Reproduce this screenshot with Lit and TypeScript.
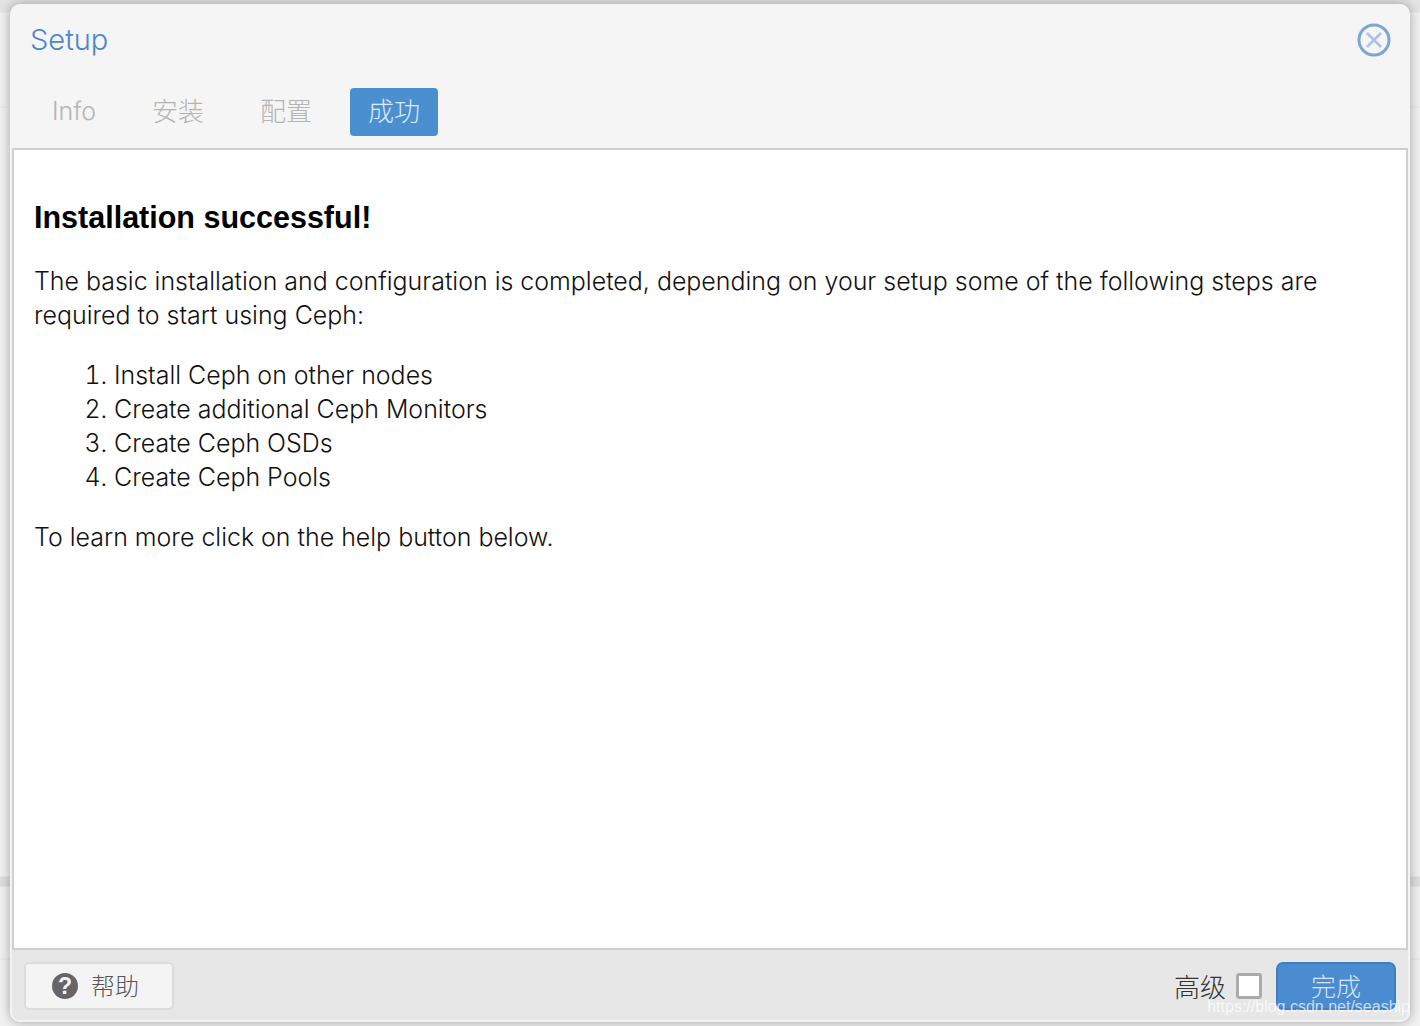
import { LitElement, html, css } from "lit";
import { customElement } from "lit/decorators.js";

const SANS = css`"Liberation Sans", "Noto Sans CJK SC", Arial, sans-serif`;
const LIGHT = css`Inter, "Noto Sans CJK SC", Arial, sans-serif`;

@customElement("app-root")
export class AppRoot extends LitElement {
  static styles = css`
    :host { display: block; width: 1420px; height: 1026px; background: #f1f1f1; font-family: ${SANS}; overflow: hidden; position: relative; }
    .page { height: 1026px; box-sizing: border-box; padding: 4px 10px 4px; background: linear-gradient(#e4e4e4 0, #e4e4e4 12px, #f1f1f1 13px, #f1f1f1 106px, #e6e6e6 107px, #f1f1f1 108px, #f1f1f1 876px, #dedede 877px, #dedede 886px, #f1f1f1 887px, #f1f1f1 958px, #e2e2e2 959px, #f1f1f1 960px); }
    .dialog { height: 1018px; box-sizing: border-box; background: #f5f5f5; border-radius: 10px; display: flex; flex-direction: column; padding: 0 2px 0; box-shadow: 0 0 12px rgba(0,0,0,.32); overflow: hidden; }
    .head { height: 84px; flex: none; display: flex; justify-content: space-between; align-items: flex-start; box-sizing: border-box; padding: 18px 18px 0 18px; }
    .title { font-family: ${LIGHT}; font-size: 29px; line-height: 36px; color: #4a88c7; font-weight: 300; }
    .close { margin: 1px -1px 0 0; width: 34px; height: 34px; display: block; }
    .tabs { height: 60px; flex: none; display: flex; gap: 20px; align-items: flex-start; padding-left: 14px; }
    .tab { width: 88px; height: 48px; padding-bottom: 5px; box-sizing: border-box; border-radius: 4px; display: flex; align-items: center; justify-content: center; font-family: ${LIGHT}; font-weight: 300; font-size: 26px; color: #b4b4b4; }
    .tab.first { padding: 0 0 3px 8px; font-size: 25px; }
    .tab.on { background: #4a8fd0; color: #dfeaf6; }
    .content { flex: 1; background: #fff; border: 2px solid #cfcfcf; box-sizing: border-box; padding: 49px 20px 0 20px; color: #111; font-family: ${LIGHT}; font-weight: 300; font-size: 24.95px; line-height: 34px; }
    h1 { margin: 0 0 29px; font-family: ${SANS}; font-size: 30.5px; line-height: 36px; font-weight: 700; color: #000; }
    p { margin: 0; }
    ol { margin: 26px 0 26px; padding: 0 0 0 80px; }
    .foot { height: 72px; flex: none; background: #e7e7e7; border: solid #f3f3f3; border-width: 0 2px 2px; border-radius: 0 0 10px 10px; display: flex; align-items: flex-start; justify-content: space-between; box-sizing: border-box; margin: 0 -2px; padding: 12px 12px 0; }
    .help { width: 150px; height: 48px; box-sizing: border-box; border: 2px solid #dcdcdc; border-radius: 5px; background: #f4f4f4; display: flex; align-items: center; gap: 13px; padding: 0 0 4px 26px; font-family: ${LIGHT}; font-weight: 300; font-size: 24px; color: #555; }
    .help svg { width: 26px; height: 26px; flex: none; margin-top: 4px; }
    .right { display: flex; align-items: center; }
    .adv { font-family: ${LIGHT}; font-weight: 300; font-size: 26px; color: #333; margin: -2px 10px 0 0; }
    .check { width: 26px; height: 26px; box-sizing: border-box; border: 3px solid #ababab; border-radius: 3px; background: #fff; margin-right: 14px; }
    .done { width: 120px; height: 48px; padding-bottom: 2px; box-sizing: border-box; border: 2px solid #3f7fc1; border-radius: 7px; background: #4a8ccf; color: #d5e4f5; font-family: ${LIGHT}; font-weight: 300; font-size: 25px; display: flex; align-items: center; justify-content: center; }
    .mark { position: absolute; right: 10px; top: 997px; font-family: ${SANS}; font-size: 16px; line-height: 20px; color: rgba(255,255,255,.72); }
  `;
  render() {
    return html`<div class="page"><div class="dialog">
      <div class="head">
        <div class="title">Setup</div>
        <svg class="close" viewBox="0 0 34 34" fill="none"><circle cx="17" cy="17" r="15" stroke="#7ea6d2" stroke-width="3"/><path d="M10 10 24 24M24 10 10 24" stroke="#a9c2e6" stroke-width="2.6"/></svg>
      </div>
      <div class="tabs">
        <div class="tab first">Info</div><div class="tab">安装</div><div class="tab">配置</div><div class="tab on">成功</div>
      </div>
      <div class="content">
        <h1>Installation successful!</h1>
        <p>The basic installation and configuration is completed, depending on your setup some of the following steps are required to start using Ceph:</p>
        <ol>
          <li>Install Ceph on other nodes</li>
          <li>Create additional Ceph Monitors</li>
          <li>Create Ceph OSDs</li>
          <li>Create Ceph Pools</li>
        </ol>
        <p>To learn more click on the help button below.</p>
      </div>
      <div class="foot">
        <div class="help"><svg viewBox="0 0 26 26"><circle cx="13" cy="13" r="13" fill="#666"/><text x="13" y="21" text-anchor="middle" font-size="23" font-weight="700" fill="#f4f4f4" font-family="Liberation Sans">?</text></svg>帮助</div>
        <div class="right"><span class="adv">高级</span><span class="check"></span><div class="done">完成</div></div>
      </div>
    </div></div><div class="mark">https://blog.csdn.net/seaship</div>`;
  }
}
